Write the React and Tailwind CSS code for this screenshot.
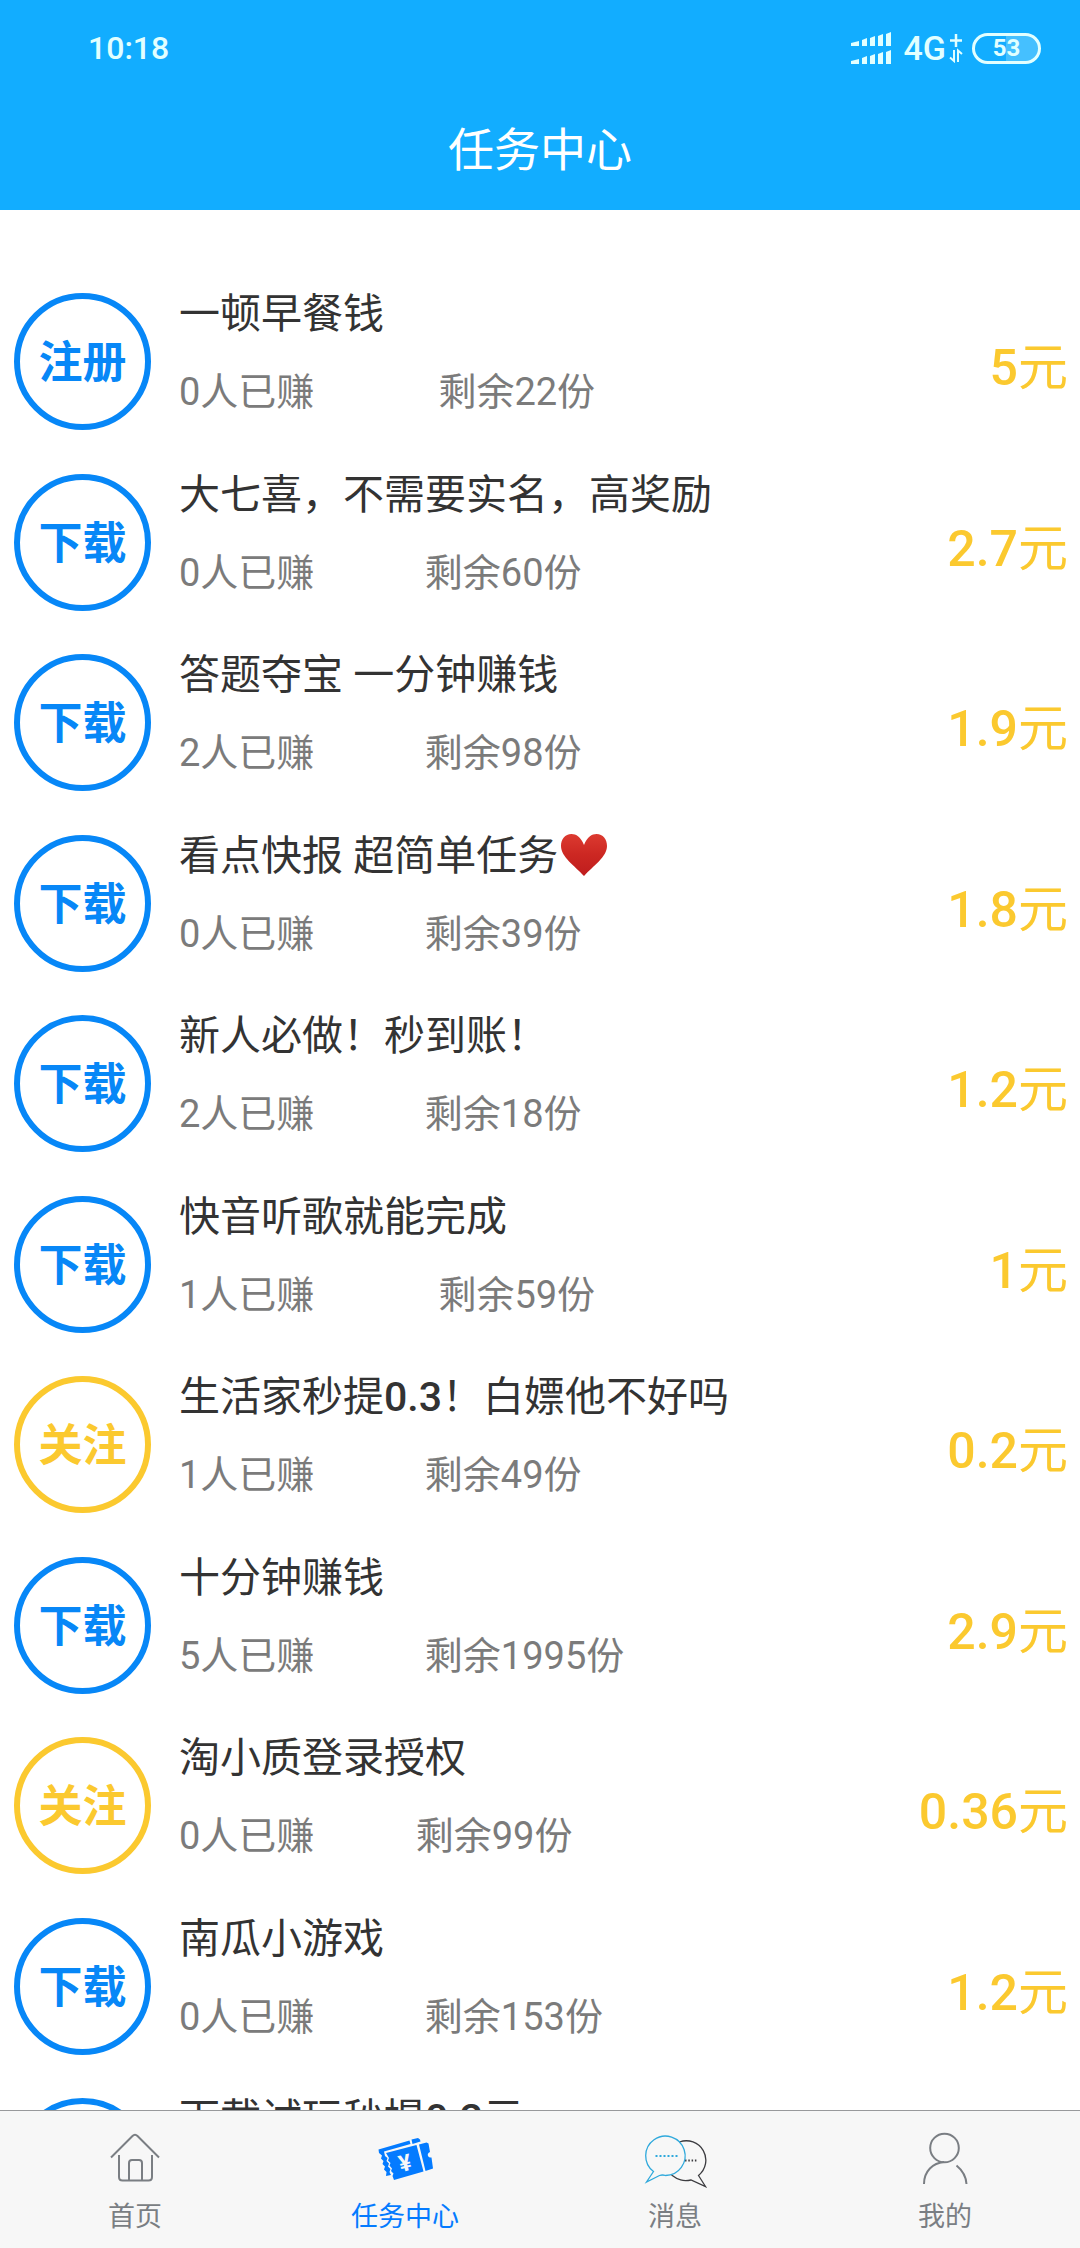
import { clsx } from 'clsx';

const tasks = [
    { id: 1, type: '注册', title: '一顿早餐钱', earned: 0, left: 22, price: '5' },
    { id: 2, type: '下载', title: '大七喜，不需要实名，高奖励', earned: 0, left: 60, price: '2.7' },
    { id: 3, type: '下载', title: '答题夺宝 一分钟赚钱', earned: 2, left: 98, price: '1.9' },
    { id: 4, type: '下载', title: '看点快报 超简单任务', heart: true, earned: 0, left: 39, price: '1.8' },
    { id: 5, type: '下载', title: '新人必做！秒到账！', earned: 2, left: 18, price: '1.2' },
    { id: 6, type: '下载', title: '快音听歌就能完成', earned: 1, left: 59, price: '1' },
    { id: 7, type: '关注', title: '生活家秒提0.3！白嫖他不好吗', earned: 1, left: 49, price: '0.2' },
    { id: 8, type: '下载', title: '十分钟赚钱', earned: 5, left: 1995, price: '2.9' },
    { id: 9, type: '关注', title: '淘小质登录授权', earned: 0, left: 99, price: '0.36' },
    { id: 10, type: '下载', title: '南瓜小游戏', earned: 0, left: 153, price: '1.2' },
    { id: 11, type: '下载', title: '下载试玩秒提0.2元', earned: 0, left: 100, price: '0.2' },
];

function SignalIcon() {
    return (
        <svg viewBox="0 0 40 32" className="h-[32px] w-[40px]" fill="currentColor">
            <path d="M0 11L8 9v5H0zM11 8L16 6v8h-5zM19 6L24 4v10h-5zM27 4L32 2v12h-5zM35 2L40 0v14h-5z" />
            <path d="M0 29L8 27v5H0zM11 26L16 24v8h-5zM19 24L24 22v10h-5zM27 22L32 20v12h-5zM35 20L40 18v14h-5z" />
        </svg>
    );
}

function DataIcon() {
    return (
        <svg viewBox="0 0 14 30" className="h-[30px] w-[14px]" fill="none" stroke="currentColor" strokeWidth="2">
            <path d="M7 1v13M1 7.5h12" strokeWidth="2.5" />
            <path d="M5 17v11L1 24.5M9 29V17.5L13 21" />
        </svg>
    );
}

function HeartIcon() {
    return (
        <svg viewBox="0 0 46 42" className="ml-[3px] inline-block h-[42px] w-[46px] align-[-6px]">
            <defs>
                <linearGradient id="heart" x1="0" y1="0" x2="0" y2="1">
                    <stop offset="0" stopColor="#dc3a30" />
                    <stop offset="0.5" stopColor="#cc2722" />
                    <stop offset="1" stopColor="#bf1d1e" />
                </linearGradient>
            </defs>
            <path
                d="M23 11C20 3 15 0 10.5 0 4 0 0 5 0 12c0 11 14 20 23 30 9-10 23-19 23-30C46 5 42 0 35.5 0 31 0 26 3 23 11z"
                fill="url(#heart)"
            />
        </svg>
    );
}

function HomeIcon() {
    return (
        <svg viewBox="-2 0 64 60" className="h-[60px] w-[64px]" fill="none" stroke="#7a7e83" strokeWidth="2">
            <path d="M6 27.5L27.5 6Q30 3.5 32.5 6L54 27.5" />
            <path d="M14 25v22q0 3.500 3.500 3.500h26q3.500 0 3.500-3.500V25" />
            <path d="M24 50V33q0-3 3-3h7q3 0 3 3v17" />
        </svg>
    );
}

function TicketIcon() {
    return (
        <svg viewBox="-2 0 64 60" className="h-[60px] w-[64px]" fill="#047bff">
            <path d="M3.5 19.5L34.5 10.5l1 3.5L9 21.5l1 4.5 2.500 2-1 3 2.500 2.500-1 3 2.500 2.500-1 3 1.500 3-5 1 .5-4-2.500-2.500 1-3L7.500 34l1-3L6 28.500l1-3L4 23z" />
            <path d="M36.5 9.5L43 8l2 1.5.5 2-8 2.5z" />
            <path d="M11 23l30.500-8 7 26.500-29.500 8.500-1.500-4 1-2.500-2.500-2.500 1-2.500-2.500-3 1-2.500-2.500-2.500 1-2.500z" />
            <path d="M44 14.500l7.500-2 2 1L55 22q-3 1.500-2 4 1 2 3.500 1.500L58 38.500l-7.500 2.500z" />
            <text x="30" y="41" fill="#f7f7f7" fontSize="23" fontWeight="700" textAnchor="middle" transform="rotate(-14 30 33)">
                ¥
            </text>
        </svg>
    );
}

function MessageIcon() {
    return (
        <svg viewBox="-2 0 64 60" className="h-[60px] w-[64px]" fill="none" strokeWidth="1.3">
            <g stroke="#3c3c40">
                <path d="M34.500 12A19.500 19.500 0 0 1 53.500 45.500L60.500 56.500 46 50c-8 1.500-13 0-19.500-5" />
                <path d="M40 30.500h12" strokeWidth="2" strokeDasharray="1.500 1.800" />
            </g>
            <g stroke="#2fa9dc">
                <path d="M8.500 41.500a19.700 19.700 0 1 1 12 4q-3-1-6 0L1.500 52z" />
                <path d="M10.500 26h22" strokeWidth="2" strokeDasharray="2 2" />
            </g>
        </svg>
    );
}

function UserIcon() {
    return (
        <svg viewBox="-2 0 64 60" className="h-[60px] w-[64px]" fill="none" stroke="#7a7e83" strokeWidth="2">
            <circle cx="29.5" cy="18" r="14.300" />
            <path d="M9 54C9 41 18 33 29 32M41.500 35.500C47 40 51 46 51.500 54" />
        </svg>
    );
}

const tabs = [
    { name: '首页', icon: HomeIcon },
    { name: '任务中心', icon: TicketIcon, active: true },
    { name: '消息', icon: MessageIcon },
    { name: '我的', icon: UserIcon },
];

// Numbers are set heavier than the Chinese characters around them
function MixedText({ children }) {
    return children.split(/([\d.]+)/).map((part, index) =>
        index % 2 === 1 ? (
            <span key={index} className="font-medium">
                {part}
            </span>
        ) : (
            part
        )
    );
}

function TaskRow({ task }) {
    return (
        <li className="odd:pb-[32px] even:pb-[31px]">
            <a href={`#task-${task.id}`} className="flex h-[149px] items-center pr-3 pl-[14px]">
                <span
                    className={clsx(
                        'flex size-[137px] shrink-0 items-center justify-center rounded-full border-[6px] pt-[3px] text-[44px] font-bold',
                        task.type === '关注' ? 'border-[#fbc92f] text-[#fbc92f]' : 'border-[#0787f7] text-[#0787f7]'
                    )}
                >
                    {task.type}
                </span>
                <div className="ml-7 min-w-0 flex-1 self-start pt-[2px] leading-[50px]">
                    <h2 className="truncate text-[41px] text-[#333333]">
                        <MixedText>{task.title}</MixedText>
                        {task.heart && <HeartIcon />}
                    </h2>
                    <div className="mt-7 flex text-[38px] whitespace-nowrap text-[#7b7b7b]">
                        <p className="w-[32%]">{task.earned}人已赚</p>
                        <p>剩余{task.left}份</p>
                    </div>
                </div>
                <p className="pt-3 text-[50px] leading-[60px] text-[#fbc92f]">
                    <MixedText>{`${task.price}元`}</MixedText>
                </p>
            </a>
        </li>
    );
}

export default function App() {
    return (
        <div className="flex h-screen flex-col bg-white font-[Roboto,'Noto_Sans_CJK_SC',sans-serif]">
            <header className="shrink-0 bg-[#12adff]">
                <div className="flex h-[96px] items-center justify-between pr-[39px] pl-[88px] text-[#e2ffff]">
                    <time className="text-[32px] font-medium">10:18</time>
                    <div className="flex items-center">
                        <SignalIcon />
                        <span className="mr-[3px] ml-[13px] text-[34px] font-medium">4G</span>
                        <DataIcon />
                        <div className="ml-[9px] flex h-[31px] w-[69px] items-center justify-center rounded-full border-[3px] bg-linear-to-r from-[#12adff] from-50% to-[#45c0ff] to-50% text-[24px] leading-none font-bold">
                            53
                        </div>
                    </div>
                </div>
                <h1 className="pb-[6px] text-center text-[46px] leading-[108px] text-white">任务中心</h1>
            </header>

            <main className="min-h-0 flex-1 overflow-hidden pt-[77px]">
                <ul>
                    {tasks.map((task) => (
                        <TaskRow key={task.id} task={task} />
                    ))}
                </ul>
            </main>

            <nav className="grid h-[138px] shrink-0 grid-cols-4 border-t border-[#98999b] bg-[#f7f7f7]">
                {tabs.map((tab) => (
                    <a
                        key={tab.name}
                        href={`#${tab.name}`}
                        aria-current={tab.active ? 'page' : undefined}
                        className={clsx(
                            'flex flex-col items-center pt-[19px] text-[27px] leading-[54px]',
                            tab.active ? 'text-[#047bff]' : 'text-[#7a7e83]'
                        )}
                    >
                        <tab.icon />
                        {tab.name}
                    </a>
                ))}
            </nav>
        </div>
    );
}
